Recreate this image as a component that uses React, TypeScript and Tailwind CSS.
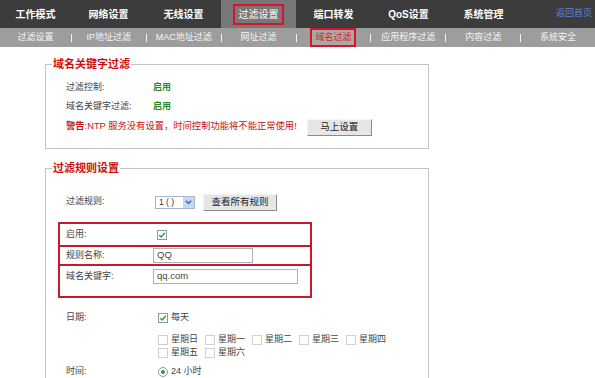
import React from "react";

const FONT = { fontFamily: '"Liberation Sans", "Noto Sans CJK SC", sans-serif' };

const topItems = ["工作模式", "网络设置", "无线设置", "过滤设置", "端口转发", "QoS设置", "系统管理"];
const subItems = ["过滤设置", "IP地址过滤", "MAC地址过滤", "网址过滤", "域名过滤", "应用程序过滤", "内容过滤", "系统安全"];
const days = ["星期日", "星期一", "星期二", "星期三", "星期四", "星期五", "星期六"];

function Check({ checked }: { checked?: boolean }) {
  return (
    <span
      className={
        "inline-flex w-[10px] h-[10px] items-center justify-center border bg-white " +
        (checked ? "border-[#8a9aa8]" : "border-[#d0d0d0]")
      }
    >
      {checked && (
        <svg width="8" height="8" viewBox="0 0 8 8">
          <path d="M1.3 4.2 L3.2 6 L6.8 1.8" fill="none" stroke="#2f9a2f" strokeWidth="1.4" />
        </svg>
      )}
    </span>
  );
}

function Btn({ children, w }: { children: React.ReactNode; w: string }) {
  return (
    <div
      className={
        "flex h-[17px] items-center justify-center border border-t-[#f4f4f4] border-l-[#f4f4f4] border-r-[#8c8c8c] border-b-[#8c8c8c] bg-[#e6e6e6] text-[9.5px] text-[#222] " +
        w
      }
    >
      {children}
    </div>
  );
}

export default function App() {
  return (
    <div className="w-[595px] h-[378px] overflow-hidden bg-white" style={FONT}>
      {/* top bar */}
      <div className="flex h-[28px] bg-[#3c3c3c]">
        {topItems.map((t, i) => (
          <div
            key={t}
            className={
              "flex items-center justify-center text-[10px] font-bold text-white " +
              (i === 0 ? "w-[71px] " : "w-[75px] ") +
              (i === 3 ? "bg-[#787878]" : "")
            }
          >
            {i === 3 ? (
              <span className="flex h-[21px] w-[51px] items-center justify-center border-2 border-[#d8142a] font-normal">
                {t}
              </span>
            ) : (
              t
            )}
          </div>
        ))}
        <div className="flex flex-1 items-center justify-end pr-[3px] text-[9px] text-[#5f86dc]">返回首页</div>
      </div>
      {/* sub bar */}
      <div className="flex h-[19px] items-center bg-[#9d9d9d]">
        {subItems.map((t, i) => (
          <React.Fragment key={t}>
            {i > 0 && <span className="h-[8px] w-px bg-[#f2f2f2]" />}
            <div
              className={
                "flex h-[19px] items-center justify-center text-[9px] " +
                (i === 0 ? "w-[71px]" : "w-[74px]") +
                (i === 4 ? " text-[#e02020]" : " text-[#f4f4f4]")
              }
            >
              {i === 4 ? (
                <span className="flex h-[19px] w-[46px] items-center justify-center border-2 border-[#d8142a] bg-[#a8a8a8]">
                  {t}
                </span>
              ) : (
                t
              )}
            </div>
          </React.Fragment>
        ))}
      </div>

      {/* fieldset 1 */}
      <fieldset className="ml-[45px] mt-[10px] w-[384px] border border-[#c4c4c4] pb-[12px]">
        <legend className="ml-[6px] px-[1px] text-[11px] font-bold leading-[14px] text-[#cc1010]">域名关键字过滤</legend>
        <div className="pl-[20px] pt-[7px] text-[9px] text-[#444]">
          <div className="flex h-[19px] items-center">
            <span className="w-[87px]">过滤控制:</span>
            <span className="font-bold text-[#2a8a2a]">启用</span>
          </div>
          <div className="flex h-[19px] items-center">
            <span className="w-[87px]">域名关键字过滤:</span>
            <span className="font-bold text-[#2a8a2a]">启用</span>
          </div>
          <div className="mt-[2px] flex h-[18px] items-center">
            <span className="text-[9.3px] text-[#c41414]">
              <span className="font-bold">警告</span>:NTP 服务没有设置，时间控制功能将不能正常使用!
            </span>
            <div className="ml-[10px]">
              <Btn w="w-[65px]">马上设置</Btn>
            </div>
          </div>
        </div>
      </fieldset>

      {/* fieldset 2 */}
      <fieldset className="ml-[45px] mt-[12px] w-[384px] border border-[#c4c4c4] pb-[40px]">
        <legend className="ml-[6px] px-[1px] text-[11px] font-bold leading-[14px] text-[#cc1010]">过滤规则设置</legend>
        <div className="pt-[17px] text-[9px] text-[#444]">
          <div className="flex h-[20px] items-center pl-[20px]">
            <span className="w-[87px]">过滤规则:</span>
            <div className="ml-[2px] flex h-[13px] w-[40px] items-center border border-[#a9b4c2] bg-white">
              <span className="flex-1 pl-[3px] text-[8.5px] text-[#333]">1 ( )</span>
              <span className="flex h-[11px] w-[11px] items-center justify-center bg-[#c8d8f0]">
                <svg width="7" height="5" viewBox="0 0 7 5">
                  <path d="M0.8 0.8 L3.5 3.6 L6.2 0.8" fill="none" stroke="#3a62b8" strokeWidth="1.4" />
                </svg>
              </span>
            </div>
            <div className="ml-[8px]">
              <Btn w="w-[74px]">查看所有规则</Btn>
            </div>
          </div>

          <div className="ml-[12px] mt-[10px] w-[254px] divide-y-2 divide-[#c41a2a] border-2 border-[#c41a2a]">
            <div className="flex h-[23px] items-center pl-[6px]">
              <span className="w-[87px]">启用:</span>
              <span className="ml-[4px] flex">
                <Check checked />
              </span>
            </div>
            <div className="flex h-[19px] items-center pl-[6px]">
              <span className="w-[87px]">规则名称:</span>
              <div className="flex h-[15px] w-[100px] items-center border border-[#a9b4c2] bg-white pl-[3px] text-[9.5px]">QQ</div>
            </div>
            <div className="flex h-[30px] items-start pl-[6px] pt-[3px]">
              <span className="flex h-[15px] w-[87px] items-center">域名关键字:</span>
              <div className="flex h-[15px] w-[145px] items-center border border-[#a9b4c2] bg-white pl-[3px] text-[9.5px]">qq.com</div>
            </div>
          </div>

          <div className="mt-[11px] flex h-[18px] items-center pl-[20px]">
            <span className="w-[87px]">日期:</span>
            <span className="ml-[5px] flex items-center gap-[3px]">
              <Check checked />
              <span>每天</span>
            </span>
          </div>
          <div className="mt-[6px] flex pl-[112px]">
            <div className="flex w-[240px] flex-wrap">
              {days.map((d) => (
                <div key={d} className="flex h-[13px] w-[47px] items-center gap-[3px]">
                  <Check />
                  <span>{d}</span>
                </div>
              ))}
            </div>
          </div>
          <div className="mt-[4px] flex h-[18px] items-center pl-[20px]">
            <span className="w-[87px]">时间:</span>
            <span className="ml-[5px] flex items-center gap-[3px]">
              <span className="flex h-[10px] w-[10px] items-center justify-center rounded-full border border-[#8a9aa8] bg-white">
                <span className="h-[4px] w-[4px] rounded-full bg-[#2f9a2f]" />
              </span>
              <span>24 小时</span>
            </span>
          </div>
        </div>
      </fieldset>
    </div>
  );
}
